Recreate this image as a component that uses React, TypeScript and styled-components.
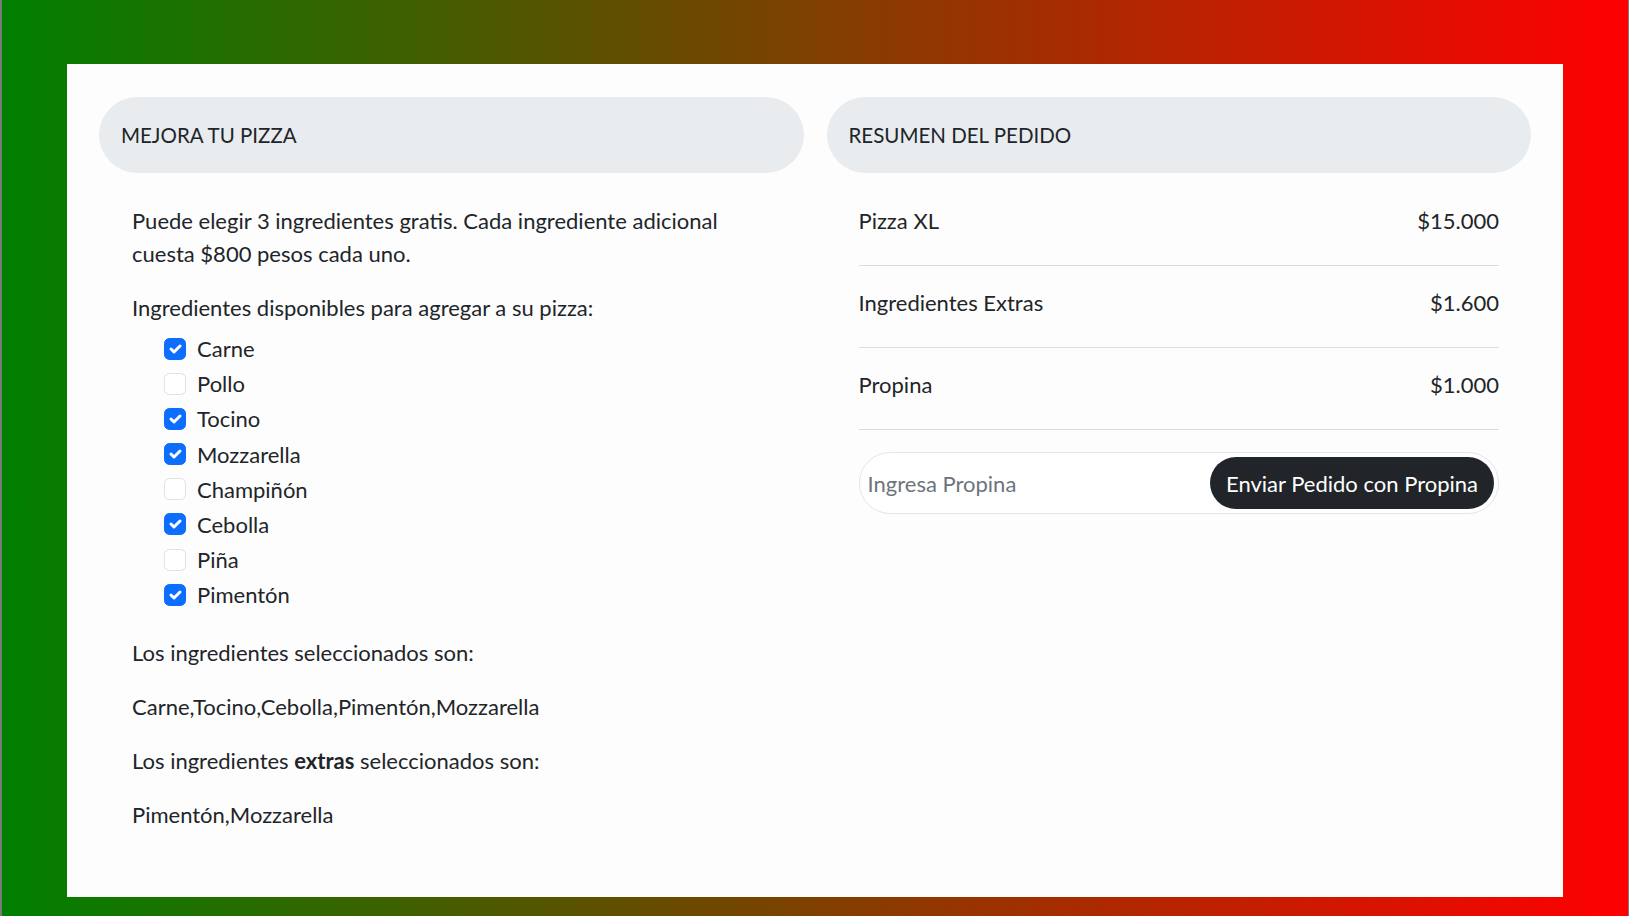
import React from "react";
import styled, { createGlobalStyle } from "styled-components";

const GlobalStyle = createGlobalStyle`
  html, body {
    margin: 0;
    padding: 0;
  }
  body {
    min-height: 916px;
    background: linear-gradient(to right, #008000, #ff0000);
    font-family: Lato, "Open Sans", sans-serif;
    color: #212529;
    border-left: 2px solid #7a7a7a;
    border-right: 1px solid #7a7a7a;
    box-sizing: border-box;
  }
  * { box-sizing: border-box; }
`;

const Page = styled.div`
  padding: 64px 65px 20px 65px;
`;

const Card = styled.main`
  background: #fdfdfd;
  padding: 33px 32px 45px;
  display: grid;
  grid-template-columns: 1fr 1fr;
  column-gap: 23px;
  align-items: start;
`;

const Column = styled.section`
  display: flex;
  flex-direction: column;
`;

const HeaderPill = styled.h2`
  margin: 0;
  background: #e9ecef;
  border-radius: 38px;
  height: 76px;
  padding: 0 22px;
  display: flex;
  align-items: center;
  font-size: 20.5px;
  font-weight: 400;
  line-height: 33px;
  color: #212529;
`;

const LeftBody = styled.div`
  padding: 31px 33px 0;
`;

const Text = styled.p<{ $gap?: number }>`
  margin: 0 0 ${(p) => (p.$gap ?? 21)}px;
  font-size: 22px;
  line-height: 33px;
`;

const CheckList = styled.div`
  margin: 0 0 22px 32px;
  display: flex;
  flex-direction: column;
`;

const CheckRow = styled.label`
  display: flex;
  align-items: flex-start;
  gap: 11px;
  font-size: 22px;
  line-height: 33px;
  margin-bottom: 2.2px;
  cursor: pointer;
`;

const Box = styled.span<{ $checked: boolean }>`
  flex: 0 0 22px;
  width: 22px;
  height: 22px;
  margin-top: 5.5px;
  border-radius: 5.5px;
  border: 1px solid ${(p) => (p.$checked ? "#0d6efd" : "#dee2e6")};
  background: ${(p) => (p.$checked ? "#0d6efd" : "#fff")};
  display: flex;
  align-items: center;
  justify-content: center;
  svg {
    width: 20px;
    height: 20px;
  }
`;

const RightBody = styled.div`
  padding: 11px 32px 0;
  display: flex;
  flex-direction: column;
`;

const SummaryRow = styled.div`
  display: flex;
  justify-content: space-between;
  align-items: center;
  padding: 20px 0 28px;
  border-bottom: 1px solid #dcdcdc;
  font-size: 22px;
  line-height: 33px;
`;

const TipGroup = styled.form`
  margin-top: 22px;
  height: 62px;
  border: 1px solid #e3e5e8;
  border-radius: 31px;
  padding: 0 4px 0 6px;
  display: flex;
  align-items: center;
  background: #fff;
`;

const TipInput = styled.input`
  flex: 1;
  min-width: 0;
  border: none;
  outline: none;
  background: transparent;
  font-family: inherit;
  font-size: 22px;
  color: #212529;
  &::placeholder {
    color: #6c757d;
  }
`;

const SendButton = styled.button`
  height: 52px;
  padding: 0 16px;
  border: none;
  border-radius: 26px;
  background: #212529;
  color: #fff;
  font-family: inherit;
  font-size: 22px;
  line-height: 33px;
  cursor: pointer;
`;

const ingredients: { name: string; checked: boolean }[] = [
  { name: "Carne", checked: true },
  { name: "Pollo", checked: false },
  { name: "Tocino", checked: true },
  { name: "Mozzarella", checked: true },
  { name: "Champiñón", checked: false },
  { name: "Cebolla", checked: true },
  { name: "Piña", checked: false },
  { name: "Pimentón", checked: true },
];

const summary = [
  { label: "Pizza XL", value: "$15.000" },
  { label: "Ingredientes Extras", value: "$1.600" },
  { label: "Propina", value: "$1.000" },
];

const Check = () => (
  <svg viewBox="0 0 20 20" fill="none">
    <path d="m6 10 3 3 6-6" stroke="#fff" strokeWidth="3" strokeLinecap="round" strokeLinejoin="round" />
  </svg>
);

export default function App() {
  return (
    <>
      <GlobalStyle />
      <Page>
        <Card>
          <Column>
            <HeaderPill>MEJORA TU PIZZA</HeaderPill>
            <LeftBody>
              <Text>
                Puede elegir 3 ingredientes gratis. Cada ingrediente adicional cuesta $800 pesos cada uno.
              </Text>
              <Text $gap={8}>Ingredientes disponibles para agregar a su pizza:</Text>
              <CheckList>
                {ingredients.map((i) => (
                  <CheckRow key={i.name}>
                    <Box $checked={i.checked}>{i.checked && <Check />}</Box>
                    {i.name}
                  </CheckRow>
                ))}
              </CheckList>
              <Text>Los ingredientes seleccionados son:</Text>
              <Text>Carne,Tocino,Cebolla,Pimentón,Mozzarella</Text>
              <Text>
                Los ingredientes <b>extras</b> seleccionados son:
              </Text>
              <Text>Pimentón,Mozzarella</Text>
            </LeftBody>
          </Column>
          <Column>
            <HeaderPill>RESUMEN DEL PEDIDO</HeaderPill>
            <RightBody>
              {summary.map((s) => (
                <SummaryRow key={s.label}>
                  <span>{s.label}</span>
                  <span>{s.value}</span>
                </SummaryRow>
              ))}
              <TipGroup onSubmit={(e) => e.preventDefault()}>
                <TipInput placeholder="Ingresa Propina" />
                <SendButton type="submit">Enviar Pedido con Propina</SendButton>
              </TipGroup>
            </RightBody>
          </Column>
        </Card>
      </Page>
    </>
  );
}
